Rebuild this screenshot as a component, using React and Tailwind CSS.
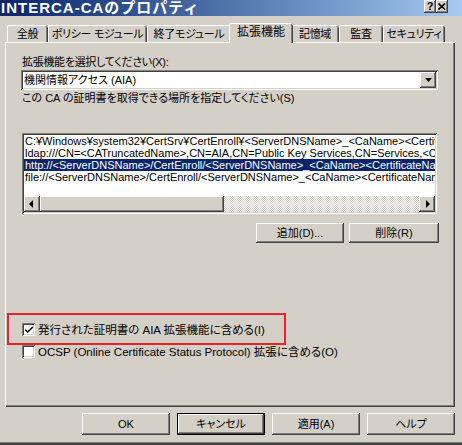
import { Check } from 'lucide-react';

const RAISED =
  'bg-[#d4d0c8] shadow-[inset_-1px_-1px_0_#404040,inset_1px_1px_0_#ffffff,inset_-2px_-2px_0_#808080]';
const SUNKEN =
  'shadow-[inset_1px_1px_0_#808080,inset_-1px_-1px_0_#ffffff,inset_2px_2px_0_#404040,inset_-2px_-2px_0_#d4d0c8]';

const TABS = [
  { label: '全般', w: 'w-[41px]' },
  { label: 'ポリシー モジュール', w: 'w-[99px]' },
  { label: '終了モジュール', w: 'w-[84px]' },
  { label: '拡張機能', w: 'w-[64px]', active: true },
  { label: '記憶域', w: 'w-[48px]' },
  { label: '監査', w: 'w-[44px]' },
  { label: 'セキュリティ', w: 'w-[62px]' },
];

const LOCATIONS = [
  'C:¥Windows¥system32¥CertSrv¥CertEnroll¥<ServerDNSName>_<CaName><CertificateName>.crt',
  'ldap:///CN=<CATruncatedName>,CN=AIA,CN=Public Key Services,CN=Services,<ConfigurationContainer>',
  'http://<ServerDNSName>/CertEnroll/<ServerDNSName>_<CaName><CertificateName>.crt',
  'file://<ServerDNSName>/CertEnroll/<ServerDNSName>_<CaName><CertificateName>.crt',
];

function Button({ children, isDefault = false, className = '' }) {
  if (isDefault) {
    return (
      <div className={`border border-black ${className}`}>
        <div className={`${RAISED} h-full flex items-center justify-center`}>{children}</div>
      </div>
    );
  }
  return (
    <div className={`${RAISED} flex items-center justify-center ${className}`}>{children}</div>
  );
}

function CheckBox({ checked }) {
  return (
    <div className={`${SUNKEN} bg-white w-[13px] h-[13px] flex items-center justify-center shrink-0`}>
      {checked && <Check size={10} strokeWidth={3.5} className="text-black" />}
    </div>
  );
}

function Arrow({ dir }) {
  return (
    <svg width="16" height="16" viewBox="0 0 16 16">
      {dir === 'left' ? (
        <polygon points="5,8 9,4 9,12" fill="#000" />
      ) : (
        <polygon points="7,4 11,8 7,12" fill="#000" />
      )}
    </svg>
  );
}

export default function App() {
  return (
    <div className="w-[462px] h-[445px] overflow-hidden bg-[#d4d0c8] flex flex-col text-[11px] leading-[14px] text-black font-['Liberation_Sans','Noto_Sans_CJK_JP',sans-serif] [font-feature-settings:'palt']">
      {/* Title bar */}
      <div className="h-[16px] shrink-0 flex items-center bg-gradient-to-r from-[#0a246a] to-[#a6caf0] pr-[14px]">
        <span className="text-white font-bold text-[15px] leading-[16px] pl-[1px] tracking-[1px] [font-feature-settings:normal]">
          INTERCA-CAのプロパティ
        </span>
        <div className="ml-auto flex self-start">
          <div className={`${RAISED} w-[12px] h-[13px] flex items-center justify-center font-bold text-[11px] leading-none`}>
            ?
          </div>
          <div className={`${RAISED} w-[12px] h-[13px] flex items-center justify-center`}>
            <svg width="8" height="7" viewBox="0 0 8 7">
              <path d="M0.5 0.5 L7 6.5 M7 0.5 L0.5 6.5" stroke="#000" strokeWidth="1.6" />
            </svg>
          </div>
        </div>
      </div>

      {/* Tabs + panel */}
      <div className="px-[5px] mt-[7px]">
        <div className="flex items-end h-[19px] pl-[2px]">
          {TABS.map((t) =>
            t.active ? (
              <div
                key={t.label}
                className={`${t.w} h-[20px] -mx-[2px] -mb-[1px] relative z-10 bg-[#d4d0c8] rounded-t-[2px] shadow-[inset_1px_0_0_#ffffff,inset_0_1px_0_#ffffff,inset_-1px_0_0_#404040,inset_-2px_0_0_#808080] flex items-center justify-center pb-[2px] whitespace-nowrap text-[12px]`}
              >
                {t.label}
              </div>
            ) : (
              <div
                key={t.label}
                className={`${t.w} h-[17px] rounded-t-[2px] shadow-[inset_1px_0_0_#ffffff,inset_0_1px_0_#ffffff,inset_-1px_0_0_#404040,inset_-2px_0_0_#808080] flex items-center justify-center whitespace-nowrap text-[11px] tracking-[-0.3px]`}
              >
                {t.label}
              </div>
            )
          )}
        </div>

        <div className="relative h-[365px] w-[450px] shadow-[inset_1px_1px_0_#ffffff,inset_-1px_-1px_0_#404040,inset_-2px_-2px_0_#808080] pt-[13px] pl-[16px] pr-[17px] flex flex-col">
          <div className="pl-[1px] tracking-[-0.3px]">拡張機能を選択してください(X):</div>

          {/* Combo box */}
          <div className={`${SUNKEN} bg-white h-[20px] mt-[1px] flex items-center pl-[3px] pr-[2px]`}>
            <span>機関情報アクセス (AIA)</span>
            <div className={`${RAISED} ml-auto w-[16px] h-[16px] flex items-center justify-center`}>
              <svg width="7" height="4" viewBox="0 0 7 4">
                <polygon points="0,0 7,0 3.5,4" fill="#000" />
              </svg>
            </div>
          </div>

          <div className="mt-[1px] pl-[1px]">この CA の証明書を取得できる場所を指定してください(S)</div>

          {/* List box */}
          <div className={`${SUNKEN} bg-white h-[81px] mt-[28px] mx-[1px] p-[2px] flex flex-col`}>
            <div className="flex-1 overflow-hidden">
              {LOCATIONS.map((loc, i) => (
                <div
                  key={loc}
                  className={`h-[12px] leading-[12px] whitespace-nowrap pl-[1px] ${
                    i === 2 ? 'bg-[#0a246a] text-white' : ''
                  }`}
                >
                  {loc}
                </div>
              ))}
            </div>
            {/* Horizontal scrollbar */}
            <div className="h-[16px] flex shrink-0">
              <div className={`${RAISED} w-[16px] h-[16px] shrink-0`}>
                <Arrow dir="left" />
              </div>
              <div className={`${RAISED} w-[184px] h-[16px] shrink-0`} />
              <div className="flex-1 bg-[repeating-conic-gradient(#ffffff_0_25%,#d4d0c8_0_50%)] bg-[length:2px_2px]" />
              <div className={`${RAISED} w-[16px] h-[16px] shrink-0`}>
                <Arrow dir="right" />
              </div>
            </div>
          </div>

          <div className="flex justify-end gap-[5px] mt-[9px] -mr-[1px]">
            <Button className="w-[88px] h-[20px]">追加(D)...</Button>
            <Button className="w-[90px] h-[20px]">削除(R)</Button>
          </div>

          <div className="mt-[80px] flex items-center gap-[3px] pl-[1px] h-[13px] whitespace-nowrap text-[11.5px]">
            <CheckBox checked />
            <span>発行された証明書の AIA 拡張機能に含める(I)</span>
          </div>
          <div className="mt-[9px] flex items-center gap-[3px] pl-[1px] h-[13px] whitespace-nowrap text-[11.5px]">
            <CheckBox />
            <span>OCSP (Online Certificate Status Protocol) 拡張に含める(O)</span>
          </div>

          {/* Annotation frame */}
          <div className="absolute left-[2px] top-[271px] w-[279px] h-[32px] border-2 border-[#e8232a] pointer-events-none" />
        </div>
      </div>

      {/* Dialog buttons */}
      <div className="flex gap-[7px] pl-[82px] mt-[6px]">
        <Button className="w-[88px] h-[22px]">OK</Button>
        <Button isDefault className="w-[88px] h-[22px]">キャンセル</Button>
        <Button className="w-[88px] h-[22px]">適用(A)</Button>
        <Button className="w-[88px] h-[22px]">ヘルプ</Button>
      </div>

      <div className="mt-auto h-[1px] bg-[#808080]" />
      <div className="h-[2px] bg-[#404040]" />
    </div>
  );
}
